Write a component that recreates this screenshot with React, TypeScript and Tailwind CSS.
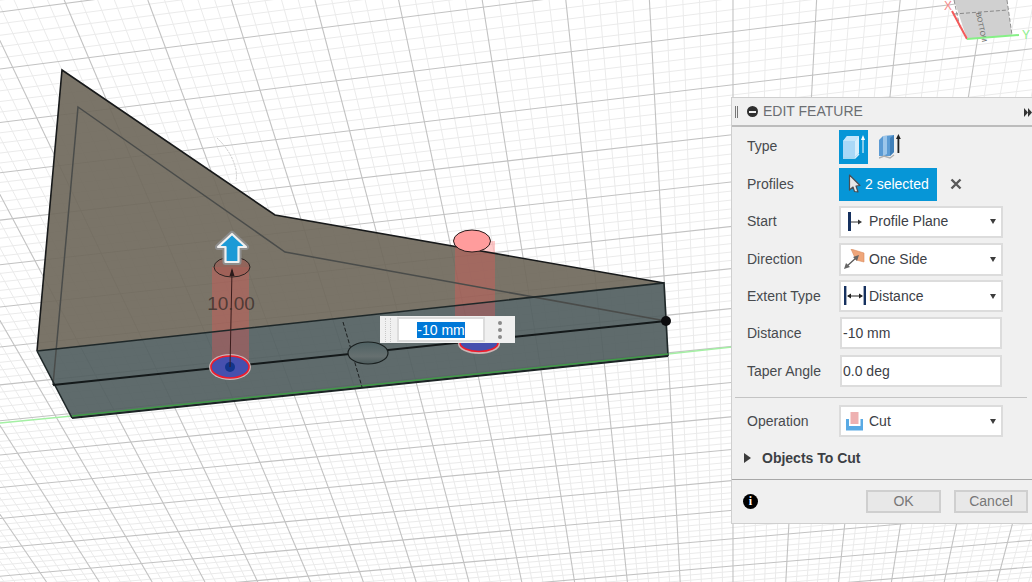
const FONT = "font-['Liberation_Sans',Arial,sans-serif]";

// ── Perspective floor grid, fitted by eye to the viewport ──
const VERT_VP = { x: 733, y: 1580 };

function gridVerticals() {
  const out: { x1: number; x2: number; major: boolean }[] = [];
  for (let i = -70; i <= 40; i++) {
    const x0 = 733 + (83.6 * i) / 5;
    const slope = (VERT_VP.x - x0) / VERT_VP.y;
    out.push({ x1: x0, x2: x0 + slope * 582, major: i % 5 === 0 });
  }
  return out;
}

function gridHorizontals() {
  const out: { y1: number; y2: number; major: boolean }[] = [];
  for (let i = -10; i <= 110; i++) {
    const y0 = 1800 - 54300 / (i / 5 + 30.37);
    const slope = -0.128 + 0.0000751 * (y0 - 69);
    out.push({ y1: y0, y2: y0 + slope * 1032, major: i % 5 === 0 });
  }
  return out;
}

function Viewport() {
  const verticals = gridVerticals();
  const horizontals = gridHorizontals();
  return (
    <svg width="1032" height="582" viewBox="0 0 1032 582" className="absolute inset-0">
      {verticals.filter((l) => !l.major).map((l, i) => (
        <line key={i} x1={l.x1} y1={0} x2={l.x2} y2={582} stroke="#ebebeb" strokeWidth="1" />
      ))}
      {horizontals.filter((l) => !l.major).map((l, i) => (
        <line key={i} x1={0} y1={l.y1} x2={1032} y2={l.y2} stroke="#ebebeb" strokeWidth="1" />
      ))}
      {verticals.filter((l) => l.major).map((l, i) => (
        <line key={i} x1={l.x1} y1={0} x2={l.x2} y2={582} stroke="#c2c2c2" strokeWidth="1.1" />
      ))}
      {horizontals.filter((l) => l.major).map((l, i) => (
        <line key={i} x1={0} y1={l.y1} x2={1032} y2={l.y2} stroke="#c2c2c2" strokeWidth="1.1" />
      ))}

      {/* faint sketch arc above the body */}
      <path d="M217 138 Q232 152 236 170 Q237 176 236 181" fill="none" stroke="#c8c8c8" strokeWidth="1" strokeDasharray="2 1" />

      {/* axis, outside the body */}
      <line x1="0" y1="423" x2="72" y2="416" stroke="#a4f0a4" strokeWidth="1.5" />
      <line x1="668" y1="354" x2="732" y2="347" stroke="#a4f0a4" strokeWidth="1.5" />

      {/* body */}
      <polygon points="62,70 275,215 664,283 37,351" fill="#6f685b" fillOpacity="0.92" />
      <polygon points="37,351 664,283 668,356 72,418" fill="#515e5f" fillOpacity="0.92" />

      {/* extrude preview columns */}
      <rect x="212" y="267" width="37" height="100" fill="#ff5050" fillOpacity="0.3" />
      <rect x="455" y="241" width="40" height="103" fill="#ff5050" fillOpacity="0.3" />

      {/* sketch profile seen through the body */}
      <path d="M53 385 L78 107 L285 252 L666 321" fill="none" stroke="#4a4c4a" strokeWidth="1.5" />

      {/* body edges */}
      <path d="M37 351 L62 70 L275 215 L664 283" fill="none" stroke="#17191a" strokeWidth="1.6" />
      <path d="M37 351 L664 283 L668 356" fill="none" stroke="#1e2728" strokeWidth="1.6" />
      <path d="M37 351 L72 418" fill="none" stroke="#1e2728" strokeWidth="1.6" />
      <line x1="53" y1="385" x2="666" y2="321" stroke="#14191a" strokeWidth="2" />
      <line x1="72" y1="418" x2="668" y2="356" stroke="#1b2324" strokeWidth="2" />
      <line x1="72" y1="416" x2="668" y2="354" stroke="#3f9a45" strokeWidth="1.5" />
      <circle cx="666" cy="321" r="5" fill="#0c0c0e" />

      {/* dashed construction line and hole */}
      <line x1="343" y1="322" x2="362" y2="387" stroke="#1c2020" strokeWidth="1" strokeDasharray="4 2" />
      <defs>
        <linearGradient id="hole" x1="0" y1="0" x2="0" y2="1">
          <stop offset="0" stopColor="#4f6163" />
          <stop offset="0.65" stopColor="#667070" />
          <stop offset="1" stopColor="#4c5a5b" />
        </linearGradient>
      </defs>
      <ellipse cx="368" cy="353" rx="20" ry="11" fill="url(#hole)" stroke="#1a2020" strokeWidth="1.2" />

      {/* left profile */}
      <ellipse cx="232" cy="267" rx="18" ry="10" fill="#a05e55" fillOpacity="0.65" stroke="#2c2422" strokeWidth="1" />
      <ellipse cx="230" cy="367" rx="21" ry="13" fill="#cdb5b5" />
      <ellipse cx="230" cy="367" rx="19" ry="11" fill="#4650ae" stroke="#f01c2c" strokeWidth="1.6" />
      <ellipse cx="230" cy="367" rx="5" ry="5" fill="#12358c" />
      <line x1="230" y1="367" x2="232" y2="270" stroke="#3a1c1c" strokeWidth="1" />
      <polygon points="232,268 229.5,276 234.5,276" fill="#2c1a1a" />
      <text x="231" y="310" textAnchor="middle" fontFamily="Liberation Sans, Arial, sans-serif" fontSize="19" fill="#3a2e2a" fillOpacity="0.8">10.00</text>

      {/* right profile */}
      <ellipse cx="472" cy="241" rx="18.5" ry="11" fill="#ff9c9c" stroke="#2a1c1c" strokeWidth="1" />
      <ellipse cx="479" cy="344" rx="21" ry="10" fill="#cdb5b5" />
      <ellipse cx="479" cy="343" rx="19" ry="8.5" fill="#4650ae" stroke="#f01c2c" strokeWidth="1.6" />

      {/* manipulator arrow */}
      <polygon points="232,234 246,247 238.5,247 238.5,262 225.5,262 225.5,247 218,247" fill="#8e8e8e" stroke="#8e8e8e" strokeWidth="6" strokeLinejoin="round" />
      <polygon points="232,234 246,247 238.5,247 238.5,262 225.5,262 225.5,247 218,247" fill="#1c9ad6" stroke="#f0f0f0" strokeWidth="2.2" strokeLinejoin="round" />

      {/* view cube */}
      <polygon points="967,39 1012,35 1007,0 954,0" fill="#d0d0d0" />
      <path d="M954 14 L1008 10 M1007 0 L1012 35 M954 0 L960 28" fill="none" stroke="#777" strokeWidth="0.8" strokeDasharray="4 2" />
      <text x="0" y="0" transform="translate(976 13) rotate(78)" fontFamily="Liberation Sans, Arial, sans-serif" fontSize="7" fill="#666">BOTTOM</text>
      <line x1="967" y1="39" x2="952" y2="11" stroke="#f45a5a" strokeWidth="2" />
      <line x1="967" y1="39" x2="1019" y2="35" stroke="#86f086" strokeWidth="2" />
      <text x="944" y="10" fontFamily="Liberation Sans, Arial, sans-serif" fontSize="12" fill="#f78a8a">X</text>
      <text x="1022" y="39" fontFamily="Liberation Sans, Arial, sans-serif" fontSize="12" fill="#8cf08c">Y</text>
    </svg>
  );
}

function DistanceBox() {
  return (
    <div className={`absolute left-[380px] top-[316px] flex h-[27px] w-[135px] items-center bg-[#f0f0f0] ${FONT}`}>
      <div className="ml-[5px] h-[24px] w-[6px] border-x border-dotted border-[#c8c8c8]" />
      <div className="ml-[6px] flex h-[25px] w-[88px] items-center justify-center border-2 border-[#dcdcdc] bg-white text-[14px] leading-none">
        <span className="bg-[#0078d7] px-0 py-[1px] text-white">-10 mm</span>
      </div>
      <div className="ml-[13px] flex flex-col gap-[3px]">
        <span className="h-[4px] w-[4px] rounded-full bg-[#8a8a8a]" />
        <span className="h-[4px] w-[4px] rounded-full bg-[#8a8a8a]" />
        <span className="h-[4px] w-[4px] rounded-full bg-[#8a8a8a]" />
      </div>
    </div>
  );
}

function Caret() {
  return <span className="ml-auto mr-[5px] h-0 w-0 border-x-[3.5px] border-t-[5px] border-x-transparent border-t-[#3c3c3c]" />;
}

function SelectBox({ icon, label }: { icon: React.ReactNode; label: string }) {
  return (
    <div className="flex h-full w-[164px] items-center border-2 border-[#dcdcdc] bg-white text-[14px] text-[#3c4046]">
      <span className="flex w-[27px] shrink-0 items-center justify-center">{icon}</span>
      <span className="ml-[1px]">{label}</span>
      <Caret />
    </div>
  );
}

function TextBox({ value }: { value: string }) {
  return (
    <div className="ml-[1px] flex h-full w-[162px] items-center border-2 border-[#dcdcdc] bg-white pl-[1px] text-[14px] text-[#3c4046]">
      {value}
    </div>
  );
}

function Row({ label, children, className }: { label: string; children: React.ReactNode; className: string }) {
  return (
    <div className={`flex items-center ${className}`}>
      <span className="w-[107px] shrink-0 pl-[15px] text-[14px] text-[#474a4e]">{label}</span>
      {children}
    </div>
  );
}

const StartIcon = (
  <svg width="16" height="20" viewBox="0 0 16 20">
    <rect x="1" y="0" width="3" height="19" fill="#16315f" />
    <line x1="4" y1="10" x2="13" y2="10" stroke="#333" strokeWidth="1" />
    <polygon points="15,10 11,7.5 11,12.5" fill="#333" />
  </svg>
);

const DirectionIcon = (
  <svg width="22" height="20" viewBox="0 0 22 20">
    <polygon points="7,0 20,4 20,13 12,11" fill="#efa67a" stroke="#d98c5e" strokeWidth="0.6" />
    <line x1="2" y1="18" x2="13" y2="8" stroke="#555" strokeWidth="1.2" />
    <polygon points="0,20 6,18 2,14" fill="#666" />
    <polygon points="15,6 9,8 13,12" fill="#666" />
  </svg>
);

const ExtentIcon = (
  <svg width="22" height="20" viewBox="0 0 22 20">
    <rect x="0" y="0" width="2.4" height="19" fill="#16315f" />
    <rect x="19.6" y="0" width="2.4" height="19" fill="#16315f" />
    <line x1="4" y1="10" x2="18" y2="10" stroke="#222" strokeWidth="1" />
    <polygon points="3,10 7,7.5 7,12.5" fill="#222" />
    <polygon points="19,10 15,7.5 15,12.5" fill="#222" />
  </svg>
);

const CutIcon = (
  <svg width="18" height="19" viewBox="0 0 18 19">
    <path d="M0 7 H3 V14 H14.5 V7 H17 V18.5 H0 Z" fill="#5aaae4" />
    <rect x="4.5" y="0" width="8" height="12" fill="#eeb1b1" />
  </svg>
);

const CursorIcon = (
  <svg width="14" height="20" viewBox="0 0 14 20">
    <path d="M1.5 1 L12 11.5 L8 12 L10 18 L6.5 17.5 L5 13 L1.5 16 Z" fill="#e8e8e8" stroke="#4a4f55" strokeWidth="1.2" strokeLinejoin="round" />
  </svg>
);

const ExtrudeIcon = (
  <svg width="22" height="27" viewBox="0 0 22 27">
    <polygon points="0,8 4,3 16,3 16,20 12,24 0,24" fill="#a9d8f7" />
    <polygon points="12,8 16,3 16,20 12,24" fill="#d6eefc" />
    <polygon points="0,8 4,3 16,3 12,8" fill="#c4e6fb" />
    <path d="M0 25 H12 L16 21" fill="none" stroke="#d6eefc" strokeWidth="1.4" />
    <line x1="20" y1="6" x2="20" y2="20" stroke="#ffffff" strokeWidth="1" />
    <polygon points="20,2 18,7 22,7" fill="#ffffff" />
  </svg>
);

const ThinExtrudeIcon = (
  <svg width="22" height="27" viewBox="0 0 22 27">
    <polygon points="0,7 4,3 15,2 15,19 11,23 0,23" fill="#5b9bd4" />
    <polygon points="4,3 8,3 8,21 4,23" fill="#9cc6ea" />
    <polygon points="11,5 15,2 15,19 11,23" fill="#3f7fb8" />
    <path d="M0 25 L5 23 L11 25 L15 22" fill="none" stroke="#b0b0b0" strokeWidth="1.4" />
    <rect x="18.5" y="5" width="1.8" height="15" fill="#222" />
    <polygon points="19.4,1 17,6 21.8,6" fill="#222" />
  </svg>
);

function FeaturePanel() {
  return (
    <div className={`absolute left-[731px] top-[97px] flex h-[427px] w-[301px] flex-col border border-r-0 border-[#cfcfcf] bg-[#f0f0f0] ${FONT}`}>
      {/* title bar */}
      <div className="relative flex h-[29px] shrink-0 items-center border-b-2 border-[#bcbcbc]">
        <span className="ml-[3px] h-[12px] w-[3px] border-x border-[#777]" />
        <span className="relative ml-[9px] flex h-[11px] w-[11px] items-center justify-center rounded-full bg-[#2f2f2f]">
          <span className="h-[2px] w-[7px] bg-[#f0f0f0]" />
        </span>
        <span className="ml-[5px] text-[14px] text-[#6b6e72]">EDIT FEATURE</span>
        <svg className="absolute right-0 top-[10px]" width="8" height="9" viewBox="0 0 8 9">
          <polygon points="0,0 4,4.5 0,9" fill="#333" />
          <polygon points="4,0 8,4.5 4,9" fill="#333" />
        </svg>
      </div>

      <Row label="Type" className="mt-[3px] h-[34px]">
        <span className="flex h-full w-[29px] items-center justify-center bg-[#0696d7]">{ExtrudeIcon}</span>
        <span className="ml-[11px] flex h-full items-center">{ThinExtrudeIcon}</span>
      </Row>
      <Row label="Profiles" className="mt-[4px] h-[33px]">
        <span className="flex h-full w-[98px] items-center bg-[#0696d7] pl-[9px] text-[14px] text-white">
          {CursorIcon}
          <span className="ml-[3px]">2 selected</span>
        </span>
        <svg className="ml-[13px]" width="12" height="12" viewBox="0 0 12 12">
          <path d="M1.5 1.5 L10.5 10.5 M10.5 1.5 L1.5 10.5" stroke="#595959" strokeWidth="2.4" />
        </svg>
      </Row>
      <Row label="Start" className="mt-[5px] h-[32px]">
        <SelectBox icon={StartIcon} label="Profile Plane" />
      </Row>
      <Row label="Direction" className="mt-[5px] h-[33px]">
        <SelectBox icon={DirectionIcon} label="One Side" />
      </Row>
      <Row label="Extent Type" className="mt-[4px] h-[33px]">
        <SelectBox icon={ExtentIcon} label="Distance" />
      </Row>
      <Row label="Distance" className="mt-[5px] h-[32px]">
        <TextBox value="-10 mm" />
      </Row>
      <Row label="Taper Angle" className="mt-[6px] h-[32px]">
        <TextBox value="0.0 deg" />
      </Row>

      <div className="ml-[3px] mr-[5px] mt-[10px] h-px bg-[#c4c4c4]" />

      <Row label="Operation" className="mt-[7px] h-[32px]">
        <SelectBox icon={CutIcon} label="Cut" />
      </Row>

      <div className="mt-[11px] flex h-[20px] items-center">
        <span className="ml-[12px] h-0 w-0 border-y-[5px] border-l-[7px] border-y-transparent border-l-[#3c3c3c]" />
        <span className="ml-[11px] text-[14px] font-bold text-[#3c3f44]">Objects To Cut</span>
      </div>

      {/* footer */}
      <div className="mt-[11px] flex h-[44px] items-center border-t border-[#a8a8a8] pb-[1px]">
        <span className="ml-[11px] flex h-[15px] w-[15px] items-center justify-center rounded-full bg-black font-['Liberation_Serif',serif] text-[12px] font-bold leading-none text-white">
          i
        </span>
        <button className="ml-[108px] h-[23px] w-[75px] border-2 border-[#cfcfcf] bg-[#e8e8e8] text-[14px] leading-none text-[#777]">OK</button>
        <button className="ml-[13px] h-[23px] w-[74px] border-2 border-[#cfcfcf] bg-[#e8e8e8] text-[14px] leading-none text-[#777]">Cancel</button>
      </div>
    </div>
  );
}

export default function App() {
  return (
    <div className="relative h-[582px] w-[1032px] overflow-hidden bg-white">
      <Viewport />
      <DistanceBox />
      <FeaturePanel />
    </div>
  );
}
